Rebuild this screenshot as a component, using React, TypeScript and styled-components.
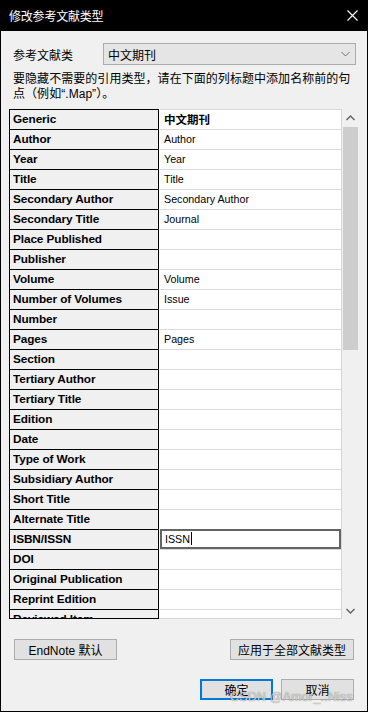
import React from "react";
import styled, { createGlobalStyle } from "styled-components";

const Global = createGlobalStyle`
  html, body { margin: 0; padding: 0; background: #f0f0f0; }
  * { box-sizing: border-box; }
`;

const UI_FONT = `"Liberation Sans", "Noto Sans CJK SC", sans-serif`;

const Window = styled.div`
  position: relative;
  width: 368px;
  height: 712px;
  background: #f0f0f0;
  border-left: 1px solid #000;
  border-right: 1px solid #000;
  border-bottom: 1px solid #000;
  display: flex;
  flex-direction: column;
  font-family: ${UI_FONT};
  font-size: 12px;
  color: #000;
  overflow: hidden;
`;

const TitleBar = styled.div`
  height: 31px;
  background: #000;
  color: #fff;
  display: flex;
  align-items: center;
  justify-content: space-between;
  padding: 0 9px 1px 8px;
  flex: none;
`;

const Title = styled.span`
  font-family: "Noto Sans CJK SC", sans-serif;
  font-size: 12px;
  letter-spacing: -0.2px;
`;

const CloseIcon = styled.svg`
  width: 11px;
  height: 11px;
  margin-top: 1px;
`;

const TypeRow = styled.div`
  margin-top: 12px;
  height: 22px;
  display: flex;
  align-items: center;
  padding-left: 12px;
`;

const Label = styled.span`
  width: 90px;
  font-family: "Noto Sans CJK SC", sans-serif;
  font-size: 12px;
`;

const Dropdown = styled.div`
  width: 253px;
  height: 22px;
  background: #e5e5e5;
  border: 1px solid #acacac;
  display: flex;
  align-items: center;
  justify-content: space-between;
  padding: 0 5px 0 4px;
  font-family: "Noto Sans CJK SC", sans-serif;
`;

const Chevron = styled.svg`
  width: 9px;
  height: 6px;
`;

const Description = styled.p`
  margin: 7px 0 0;
  padding-left: 12px;
  line-height: 15px;
  font-size: 12px;
  letter-spacing: 0.05px;
`;

const TableArea = styled.div`
  margin: 7px 0 0 8px;
  height: 510px;
  display: flex;
`;

const LeftColumn = styled.div`
  width: 150px;
  height: 510px;
  border-left: 1px solid #000;
  border-right: 1px solid #000;
  border-bottom: 1px solid #000;
  overflow: hidden;
  flex: none;
`;

const RightColumn = styled.div`
  width: 183px;
  height: 510px;
  background: #fff;
  border-right: 1px solid #d6d6d6;
  border-bottom: 1px solid #d6d6d6;
  overflow: hidden;
  flex: none;
`;

const NameCell = styled.div`
  height: 20px;
  border-top: 1px solid #000;
  padding: 0 0 1px 3px;
  display: flex;
  align-items: center;
  font-family: "Liberation Sans", sans-serif;
  font-weight: bold;
  font-size: 11.8px;
  letter-spacing: -0.1px;
  white-space: nowrap;
`;

const ValueCell = styled.div<{ $bold?: boolean; $editing?: boolean }>`
  position: relative;
  height: 20px;
  border-top: 1px solid #dadada;
  margin-left: 1px;
  padding: 0 0 1px ${(p) => (p.$editing ? 3 : 4)}px;
  display: flex;
  align-items: center;
  font-family: ${(p) => (p.$bold ? `"Noto Sans CJK SC", sans-serif` : UI_FONT)};
  font-weight: ${(p) => (p.$bold ? 700 : 400)};
  font-size: ${(p) => (p.$bold ? 11.5 : 10.7)}px;
  white-space: nowrap;
  ${(p) =>
    p.$editing &&
    `
    border: 2px solid #646464;
    height: 20px;
  `}
`;

const Caret = styled.span`
  display: inline-block;
  width: 1px;
  height: 13px;
  background: #000;
  margin-left: 1px;
`;

const ScrollBar = styled.div`
  width: 17px;
  height: 510px;
  background: #f0f0f0;
  display: flex;
  flex-direction: column;
  align-items: center;
  flex: none;
`;

const ArrowButton = styled.div`
  width: 17px;
  height: 17px;
  display: flex;
  align-items: center;
  justify-content: center;
  flex: none;
`;

const Thumb = styled.div`
  width: 15px;
  height: 223px;
  margin-top: 1px;
  background: #cdcdcd;
  flex: none;
`;

const Spacer = styled.div`
  flex: 1;
`;

const ButtonRow = styled.div<{ $top: number; $gap?: number }>`
  margin-top: ${(p) => p.$top}px;
  padding: 0 13px;
  display: flex;
  justify-content: ${(p) => (p.$gap ? "flex-end" : "space-between")};
  gap: ${(p) => p.$gap ?? 0}px;
`;

const Button = styled.div<{ $width: number; $primary?: boolean }>`
  width: ${(p) => p.$width}px;
  height: 21px;
  background: #e1e1e1;
  border: ${(p) => (p.$primary ? "2px solid #0078d7" : "1px solid #adadad")};
  display: flex;
  align-items: center;
  justify-content: center;
  font-family: ${UI_FONT};
  font-size: 12px;
  padding-bottom: 1px;
`;

const Watermark = styled.span`
  position: absolute;
  right: 14px;
  bottom: 7px;
  font-family: "Liberation Sans", sans-serif;
  font-size: 12.5px;
  color: rgba(235, 235, 235, 0.75);
  text-shadow: 0 0 1px rgba(90, 90, 90, 0.9);
  letter-spacing: 0.2px;
`;

const rows: [string, string][] = [
  ["Generic", "中文期刊"],
  ["Author", "Author"],
  ["Year", "Year"],
  ["Title", "Title"],
  ["Secondary Author", "Secondary Author"],
  ["Secondary Title", "Journal"],
  ["Place Published", ""],
  ["Publisher", ""],
  ["Volume", "Volume"],
  ["Number of Volumes", "Issue"],
  ["Number", ""],
  ["Pages", "Pages"],
  ["Section", ""],
  ["Tertiary Author", ""],
  ["Tertiary Title", ""],
  ["Edition", ""],
  ["Date", ""],
  ["Type of Work", ""],
  ["Subsidiary Author", ""],
  ["Short Title", ""],
  ["Alternate Title", ""],
  ["ISBN/ISSN", "ISSN"],
  ["DOI", ""],
  ["Original Publication", ""],
  ["Reprint Edition", ""],
  ["Reviewed Item", ""],
];

const UpArrow = () => (
  <svg width="9" height="6" viewBox="0 0 9 6">
    <path d="M0.5 5 L4.5 1 L8.5 5" fill="none" stroke="#606060" strokeWidth="1.4" />
  </svg>
);

const DownArrow = () => (
  <svg width="9" height="6" viewBox="0 0 9 6">
    <path d="M0.5 1 L4.5 5 L8.5 1" fill="none" stroke="#606060" strokeWidth="1.4" />
  </svg>
);

export default function App() {
  return (
    <Window>
      <Global />
      <TitleBar>
        <Title>修改参考文献类型</Title>
        <CloseIcon viewBox="0 0 11 11">
          <path d="M0.5 0.5 L10.5 10.5 M10.5 0.5 L0.5 10.5" stroke="#fff" strokeWidth="1.1" />
        </CloseIcon>
      </TitleBar>

      <TypeRow>
        <Label>参考文献类</Label>
        <Dropdown>
          <span>中文期刊</span>
          <Chevron viewBox="0 0 9 6">
            <path d="M0.5 1 L4.5 5 L8.5 1" fill="none" stroke="#707070" strokeWidth="1" />
          </Chevron>
        </Dropdown>
      </TypeRow>

      <Description>
        要隐藏不需要的引用类型，请在下面的列标题中添加名称前的句
        <br />
        点（例如“.Map”）。
      </Description>

      <TableArea>
        <LeftColumn>
          {rows.map(([name]) => (
            <NameCell key={name}>{name}</NameCell>
          ))}
        </LeftColumn>
        <RightColumn>
          {rows.map(([name, value], i) => (
            <ValueCell key={name} $bold={i === 0} $editing={name === "ISBN/ISSN"}>
              {value}
              {name === "ISBN/ISSN" && <Caret />}
            </ValueCell>
          ))}
        </RightColumn>
        <ScrollBar>
          <ArrowButton>
            <UpArrow />
          </ArrowButton>
          <Thumb />
          <Spacer />
          <ArrowButton>
            <DownArrow />
          </ArrowButton>
        </ScrollBar>
      </TableArea>

      <ButtonRow $top={20}>
        <Button $width={103}>EndNote 默认</Button>
        <Button $width={124}>应用于全部文献类型</Button>
      </ButtonRow>
      <ButtonRow $top={19} $gap={8}>
        <Button $width={73} $primary>
          确定
        </Button>
        <Button $width={73}>取消</Button>
      </ButtonRow>

      <Watermark>CSDN @Amor_..Niss</Watermark>
    </Window>
  );
}
